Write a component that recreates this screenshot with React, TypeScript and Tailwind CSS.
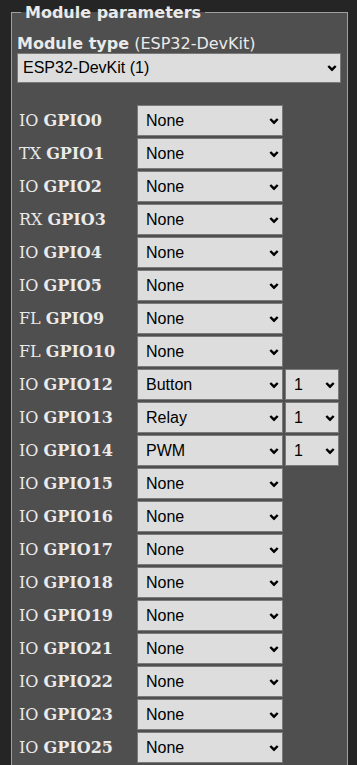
type Pin = { tag: string; gpio: string; value: string; index?: string };

const pins: Pin[] = [
  { tag: "IO", gpio: "GPIO0", value: "None" },
  { tag: "TX", gpio: "GPIO1", value: "None" },
  { tag: "IO", gpio: "GPIO2", value: "None" },
  { tag: "RX", gpio: "GPIO3", value: "None" },
  { tag: "IO", gpio: "GPIO4", value: "None" },
  { tag: "IO", gpio: "GPIO5", value: "None" },
  { tag: "FL", gpio: "GPIO9", value: "None" },
  { tag: "FL", gpio: "GPIO10", value: "None" },
  { tag: "IO", gpio: "GPIO12", value: "Button", index: "1" },
  { tag: "IO", gpio: "GPIO13", value: "Relay", index: "1" },
  { tag: "IO", gpio: "GPIO14", value: "PWM", index: "1" },
  { tag: "IO", gpio: "GPIO15", value: "None" },
  { tag: "IO", gpio: "GPIO16", value: "None" },
  { tag: "IO", gpio: "GPIO17", value: "None" },
  { tag: "IO", gpio: "GPIO18", value: "None" },
  { tag: "IO", gpio: "GPIO19", value: "None" },
  { tag: "IO", gpio: "GPIO21", value: "None" },
  { tag: "IO", gpio: "GPIO22", value: "None" },
  { tag: "IO", gpio: "GPIO23", value: "None" },
  { tag: "IO", gpio: "GPIO25", value: "None" },
];

function Chevron() {
  return (
    <svg
      width="10"
      height="7"
      viewBox="0 0 10 7"
      className="pointer-events-none absolute right-[4px] top-1/2 -translate-y-1/2"
    >
      <polyline points="1.3,1.5 5,5.2 8.7,1.5" fill="none" stroke="#000" strokeWidth="2.4" />
    </svg>
  );
}

function Select({ value, className, pad }: { value: string; className: string; pad: string }) {
  return (
    <div className={"relative " + className}>
      <select
        defaultValue={value}
        className={
          "h-full w-full appearance-none border border-[#7a7a7a] bg-[#dddddd] text-[16px] text-black outline-none " +
          pad
        }
        style={{ fontFamily: '"Liberation Sans", Arial, sans-serif' }}
      >
        <option>{value}</option>
      </select>
      <Chevron />
    </div>
  );
}

export default function App() {
  return (
    <div className="min-h-screen bg-[#252525] pl-[11px] pr-[9px] pt-[3px] text-[#eaeaea]">
      <fieldset className="border border-[#a0a0a0] bg-[#4f4f4f] px-[5px] pb-[10px] font-['DejaVu_Sans',Verdana,sans-serif]">
        <legend className="ml-[4px] px-[4px] text-[16px] font-bold leading-[19px]">
          Module parameters
        </legend>
        <p className="mt-[13px] text-[16px] leading-[18px]">
          <b>Module type</b> (ESP32-DevKit)
        </p>
        <Select value="ESP32-DevKit (1)" className="h-[30px] w-[324px]" pad="pl-[5px]" />

        <div className="mt-[22px] flex flex-col gap-[2px]">
          {pins.map((p) => (
            <div key={p.gpio} className="flex h-[31px] items-center">
              <div className="w-[120px] pl-[2px] font-['DejaVu_Serif',serif] text-[16px] leading-[19px]">
                {p.tag} <b>{p.gpio}</b>
              </div>
              <Select value={p.value} className="h-full w-[146px]" pad="pl-[8px]" />
              {p.index && (
                <Select value={p.index} className="ml-[2px] h-full w-[54px]" pad="pl-[8px]" />
              )}
            </div>
          ))}
        </div>
      </fieldset>
    </div>
  );
}
